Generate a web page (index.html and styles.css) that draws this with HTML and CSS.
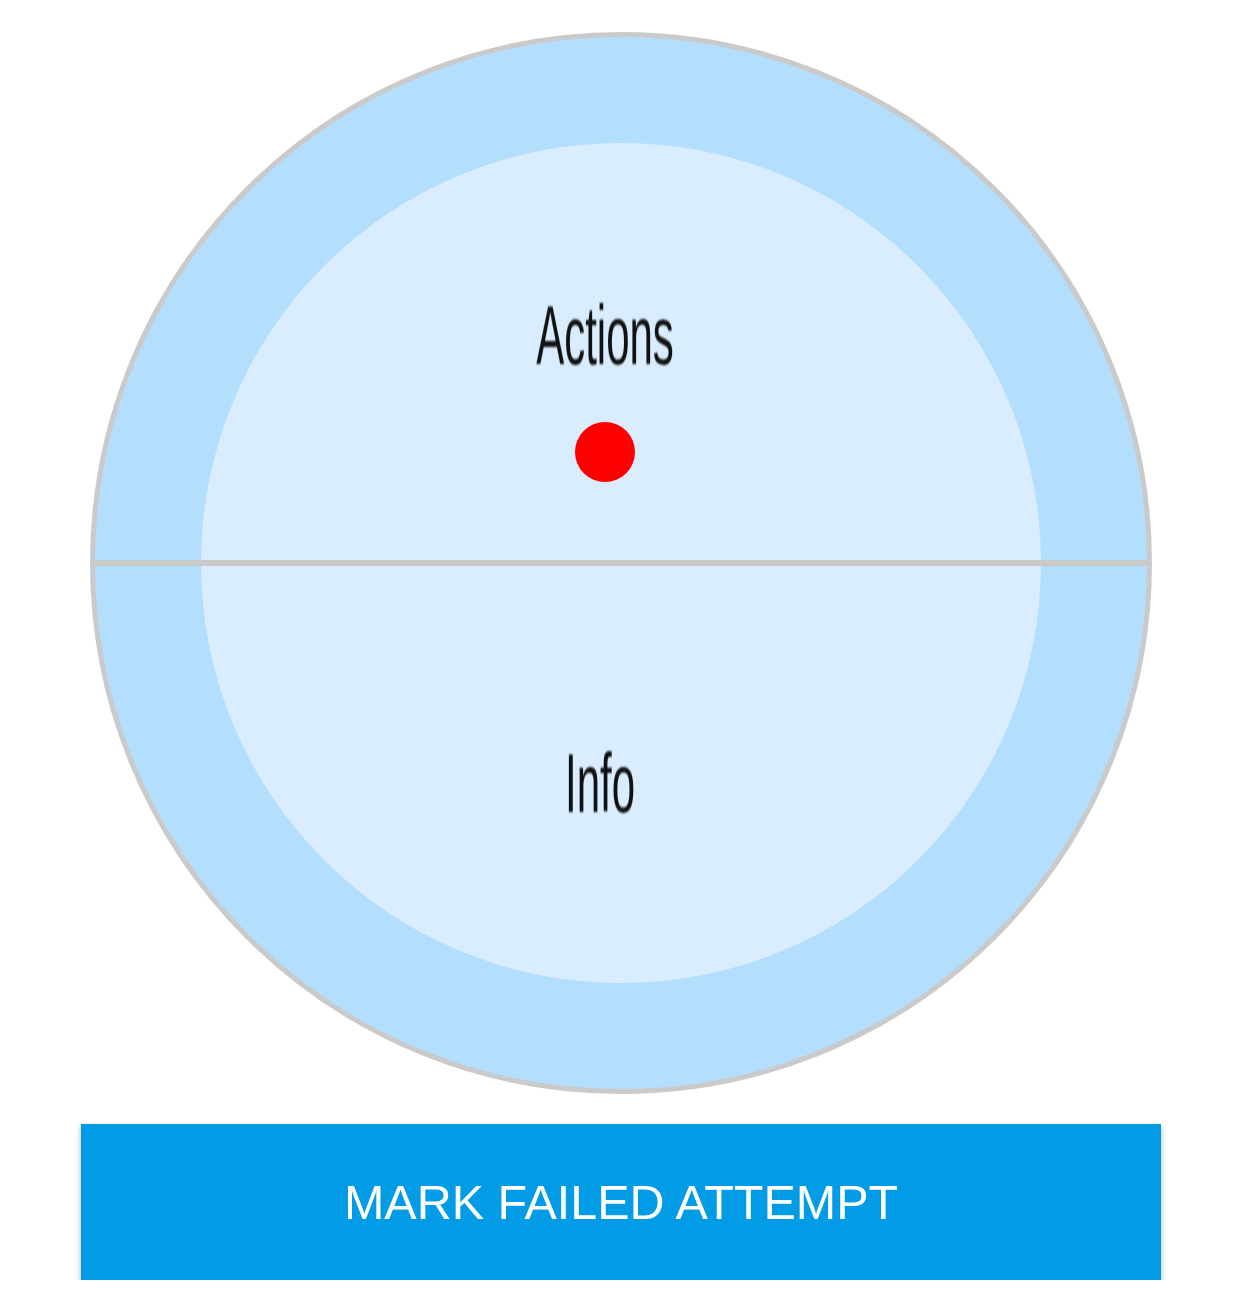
FILE: index.html
```html
<!DOCTYPE html>
<html>
<head>
<meta charset="utf-8">
<link rel="stylesheet" href="styles.css">
</head>
<body>
<div class="page">
  <div class="dial">
    <div class="inner">
      <div class="label label-actions">Actions</div>
      <div class="dot"></div>
      <div class="label label-info">Info</div>
    </div>
  </div>
  <button class="action-btn">MARK FAILED ATTEMPT</button>
</div>
</body>
</html>
```
FILE: styles.css
```css
html, body {
  margin: 0;
  padding: 0;
  background: #ffffff;
}
.page {
  padding-top: 32px;
  display: flex;
  flex-direction: column;
  align-items: center;
  font-family: "Liberation Sans", Arial, sans-serif;
}
.dial {
  position: relative;
  box-sizing: border-box;
  width: 1062px;
  height: 1062px;
  border: 5px solid #cacaca;
  border-radius: 50%;
  background: #b3defe;
  display: flex;
  align-items: center;
  justify-content: center;
}
.dial::after {
  content: "";
  position: absolute;
  left: 0;
  right: 0;
  top: 523px;
  height: 6px;
  background: #cacaca;
}
.inner {
  box-sizing: border-box;
  width: 840px;
  height: 840px;
  border-radius: 50%;
  background: #d9edfe;
  display: flex;
  flex-direction: column;
  align-items: center;
  padding-top: 172px;
}
.label {
  font-size: 42px;
  line-height: 42px;
  height: 42px;
  color: #111111;
  transform: scaleY(2);
  filter: blur(0.6px);
}
.label-actions {
  margin-right: 32px;
}
.dot {
  width: 60px;
  height: 60px;
  border-radius: 50%;
  background: #ff0000;
  margin-top: 65px;
  margin-right: 32px;
}
.label-info {
  margin-top: 281px;
  margin-right: 42px;
}
.action-btn {
  margin-top: 30px;
  width: 1080px;
  height: 156px;
  border: none;
  padding: 0;
  background: #019ce5;
  color: #ffffff;
  font-family: "Liberation Sans", Arial, sans-serif;
  font-size: 48.5px;
  line-height: 1;
  box-shadow: 0 3px 6px rgba(0, 0, 0, 0.3);
  display: flex;
  align-items: center;
  justify-content: center;
}
```
